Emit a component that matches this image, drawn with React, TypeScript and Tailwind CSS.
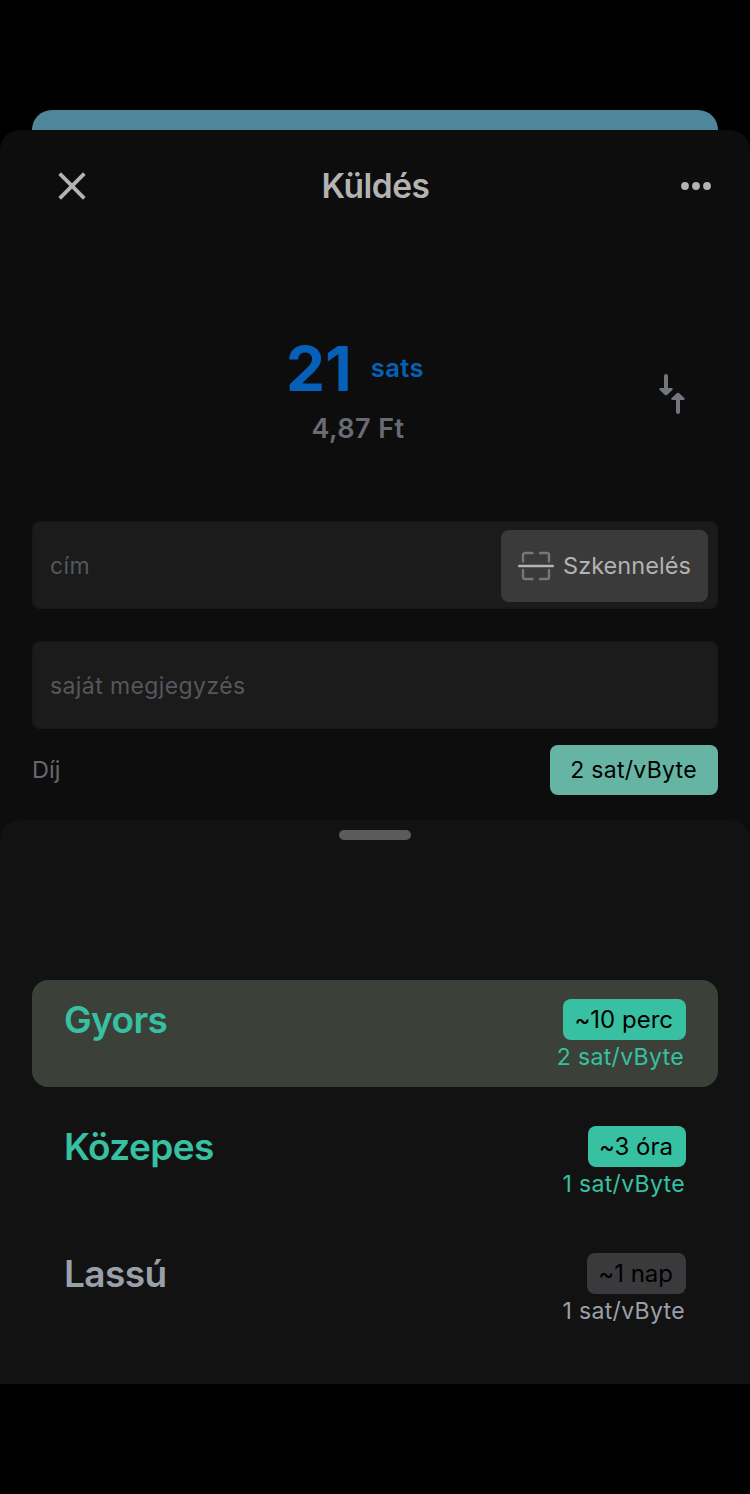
type FeeOption = {
  label: string;
  time: string;
  rate: string;
  active?: boolean;
  disabled?: boolean;
};

const options: FeeOption[] = [
  { label: "Gyors", time: "~10 perc", rate: "2 sat/vByte", active: true },
  { label: "Közepes", time: "~3 óra", rate: "1 sat/vByte" },
  { label: "Lassú", time: "~1 nap", rate: "1 sat/vByte", disabled: true },
];

function Header() {
  return (
    <header className="flex h-28 items-center justify-between pl-[58px] pr-[38px]">
      <button aria-label="Close" className="flex w-[106px]">
        <svg width="28" height="28" viewBox="0 0 28 28" fill="none">
          <path
            d="M1.700 1.700 26.300 26.300M26.300 1.700 1.700 26.300"
            stroke="#b3b3b3"
            strokeWidth="3.800"
          />
        </svg>
      </button>
      <h1 className="relative left-[-9.5px] text-[33.5px] font-semibold leading-10 tracking-[-0.45px] text-[#b3b3b3]">
        Küldés
      </h1>
      <button aria-label="More" className="flex w-[106px] justify-end">
        <svg width="32" height="10" viewBox="0 0 32 10" fill="#b3b3b3">
          <circle cx="5" cy="5" r="3.900" />
          <circle cx="16" cy="5" r="3.900" />
          <circle cx="27" cy="5" r="3.900" />
        </svg>
      </button>
    </header>
  );
}

function Amount() {
  return (
    <section className="flex h-[279px] pt-[94px]">
      <div className="w-[32px]" />
      <div className="flex w-[652px] flex-col items-center">
        <div className="mr-[6px] flex h-[64px] items-center text-[#0660b9]">
          <span className="mt-0.5 text-[62px] font-bold leading-[64px]">21</span>
          <span className="ml-[19px] text-[25.5px] font-semibold tracking-[0.5px]">sats</span>
        </div>
        <div className="mt-[13px] text-[27px] font-semibold leading-8 tracking-[0.4px] text-[#696b73]">
          4,87 Ft
        </div>
      </div>
      <svg className="-ml-[26px] mt-[36px]" width="28" height="44" viewBox="0 0 28 44" fill="#72767f">
        <path d="M6 4a2 2 0 0 1 4 0v12h3.500c1.300 0 1.700 1 .8 1.900l-5 4.800c-.8.700-1.800.7-2.600 0l-5-4.800c-.9-.9-.5-1.900.8-1.900H6z" />
        <path d="M18 40a2 2 0 0 0 4 0V28h3.500c1.300 0 1.700-1 .8-1.900l-5-4.800c-.8-.7-1.800-.7-2.600 0l-5 4.800c-.9.900-.5 1.900.8 1.900H18z" />
      </svg>
    </section>
  );
}

function ScanIcon() {
  return (
    <svg width="36" height="30" viewBox="0 0 36 30" fill="none" strokeLinecap="round">
      <path
        d="M5 10.500V4q0-2 2-2h7.500M22 2h7q2 0 2 2v6.500M31 19v7q0 2-2 2h-7M14.500 28H7q-2 0-2-2v-7"
        stroke="#777"
        strokeWidth="2.400"
      />
      <path d="M1.200 15h33.600" stroke="#b3b3b3" strokeWidth="2.400" />
    </svg>
  );
}

function FeeRow({ option }: { option: FeeOption }) {
  return (
    <div
      className={`flex h-[107px] justify-between rounded-2xl px-8 pt-[19px] ${
        option.active ? "bg-[#3b4039]" : ""
      } ${option.disabled ? "text-[#9aa0aa]" : "text-[#37c0a1]"}`}
    >
      <span className="text-[37px] font-semibold leading-[42px] tracking-[-0.6px]">
        {option.label}
      </span>
      <div className="flex flex-col items-end">
        <span
          className={`flex h-[41px] items-center rounded-lg pl-[11px] pr-[13px] text-[24px] text-black ${
            option.disabled ? "bg-[#3a3a3c]" : "bg-[#37c0a1]"
          }`}
        >
          {option.time}
        </span>
        <span
          className={`mt-[3px] text-[23px] leading-7 tracking-[0.35px] ${
            option.active ? "mr-0.5" : "mr-px"
          }`}
        >
          {option.rate}
        </span>
      </div>
    </div>
  );
}

export default function App() {
  return (
    <main className="flex h-[1494px] w-[750px] flex-col whitespace-nowrap bg-black pt-[110px] font-['Inter',sans-serif] [font-feature-settings:'calt'_0]">
      <div className="mx-8 h-5 shrink-0 rounded-t-[20px] bg-[#4e879a]" />
      <div className="flex h-[1254px] shrink-0 flex-col rounded-t-[20px] bg-[#0d0d0d]">
        <Header />
        <Amount />

        {/* address and memo */}
        <div className="mx-8 flex flex-col gap-8 text-[23px] tracking-[0.4px] text-[#55575d]">
          <div className="flex h-[88px] items-center justify-between rounded-lg border-2 border-[#191919] bg-[#1b1b1b] pl-4 pr-2">
            <span className="mt-0.5">cím</span>
            <button className="mt-0.5 flex h-[72px] w-[207px] items-center gap-[9px] rounded-lg bg-[#3a3a3a] pl-[17px] text-[23.5px] tracking-[0.05px] text-[#b3b3b3]">
              <ScanIcon />
              Szkennelés
            </button>
          </div>
          <div className="flex h-[88px] items-center rounded-lg border-2 border-[#191919] bg-[#1b1b1b] px-4 pt-0.5">
            saját megjegyzés
          </div>
        </div>

        <div className="mx-8 mt-4 flex h-[50px] items-center justify-between">
          <span className="text-[23.5px] text-[#65686e]">Díj</span>
          <span className="flex h-[50px] w-[168px] items-center justify-center rounded-lg bg-[#66b5a4] pr-px text-[23px] tracking-[0.3px] text-black">
            2 sat/vByte
          </span>
        </div>

        {/* fee picker */}
        <section className="mt-[25px] flex flex-1 flex-col rounded-t-[20px] bg-[#121212] px-8 pt-2.5">
          <div className="h-2.5 w-[72px] self-center rounded-full bg-[#5b5b5e]" />
          <div className="mt-[140px] flex flex-col gap-5">
            {options.map((option) => (
              <FeeRow key={option.label} option={option} />
            ))}
          </div>
        </section>
      </div>
    </main>
  );
}
